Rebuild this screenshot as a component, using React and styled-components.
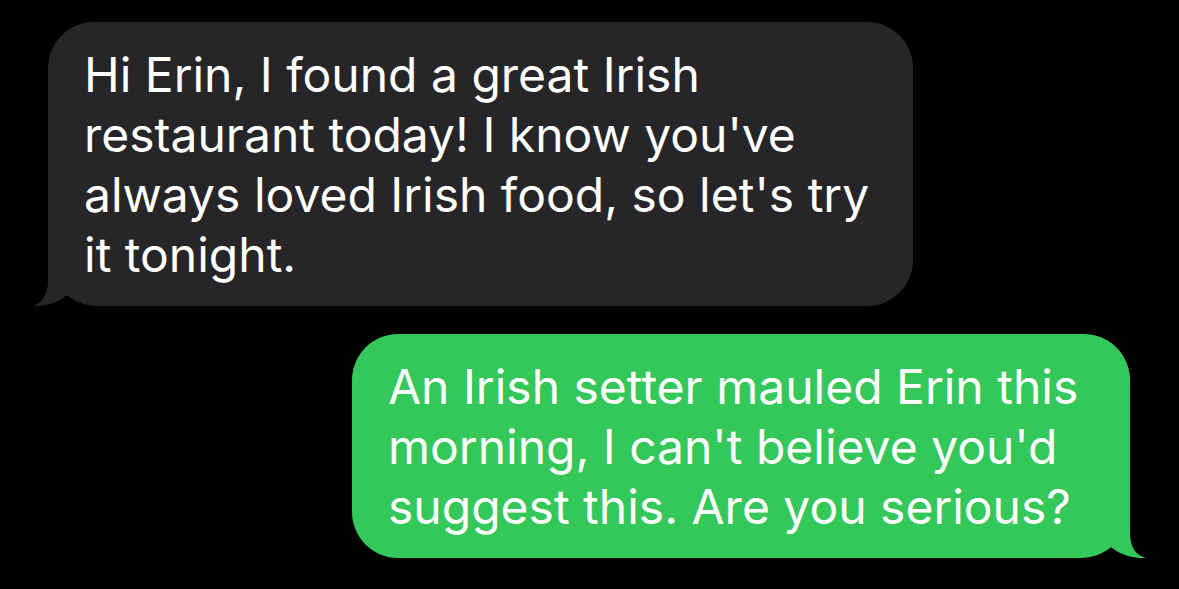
import React from "react";
import styled, { createGlobalStyle } from "styled-components";

const GlobalStyle = createGlobalStyle`
	html, body {
		margin: 0;
		padding: 0;
		background: #000;
	}
	body {
		font-family: Inter, "Open Sans", "Liberation Sans", sans-serif;
		-webkit-font-smoothing: antialiased;
	}
`;

const messages = [
	{
		from: "them",
		lines: ["Hi Erin, I found a great Irish", "restaurant today! I know you've", "always loved Irish food, so let's try", "it tonight."]
	},
	{
		from: "me",
		lines: ["An Irish setter mauled Erin this", "morning, I can't believe you'd", "suggest this. Are you serious?"]
	}
];

const Tail = ({ color, side }) => (
	<TailSvg $side={side} width="76" height="50" viewBox="0 0 76 50">
		<path d="M16 0 L16 24 C16 40 10 47 0 50 C12 51 28 46 35 39 C42 45 52 49 72 50 L76 50 L76 0 Z" fill={color} />
	</TailSvg>
);

const App = () => {
	return (
		<>
			<GlobalStyle />
			<Thread>
				{messages.map((m, i) => {
					const mine = m.from === "me";
					return (
						<Bubble key={i} $mine={mine}>
							<Tail color={mine ? "#34c759" : "#262628"} side={mine ? "right" : "left"} />
							<Text>
								{m.lines.map((l, j) => (
									<Line key={j}>{l}</Line>
								))}
							</Text>
						</Bubble>
					);
				})}
			</Thread>
		</>
	);
};

const Thread = styled.div`
	display: flex;
	flex-direction: column;
	gap: 28px;
	padding: 22px 49px 0 48px;
	width: 1179px;
	height: 589px;
	box-sizing: border-box;
`;

const Bubble = styled.div`
	position: relative;
	box-sizing: border-box;
	width: ${(p) => (p.$mine ? "778px" : "865px")};
	align-self: ${(p) => (p.$mine ? "flex-end" : "flex-start")};
	background: ${(p) => (p.$mine ? "#34c759" : "#262628")};
	border-radius: 46px;
	${(p) => (p.$mine ? "border-bottom-right-radius: 50px;" : "border-bottom-left-radius: 50px;")}
	padding: 23px 36px 21px 36px;
	color: #fff;
`;

const TailSvg = styled.svg`
	position: absolute;
	bottom: 0;
	z-index: 0;
	${(p) => (p.$side === "left" ? "left: -16px;" : "right: -16px; transform: scaleX(-1);")}
`;

const Text = styled.div`
	position: relative;
	z-index: 1;
	font-size: 48px;
	line-height: 60px;
	letter-spacing: 0;
`;

const Line = styled.div`
	white-space: nowrap;
`;

export default App;
